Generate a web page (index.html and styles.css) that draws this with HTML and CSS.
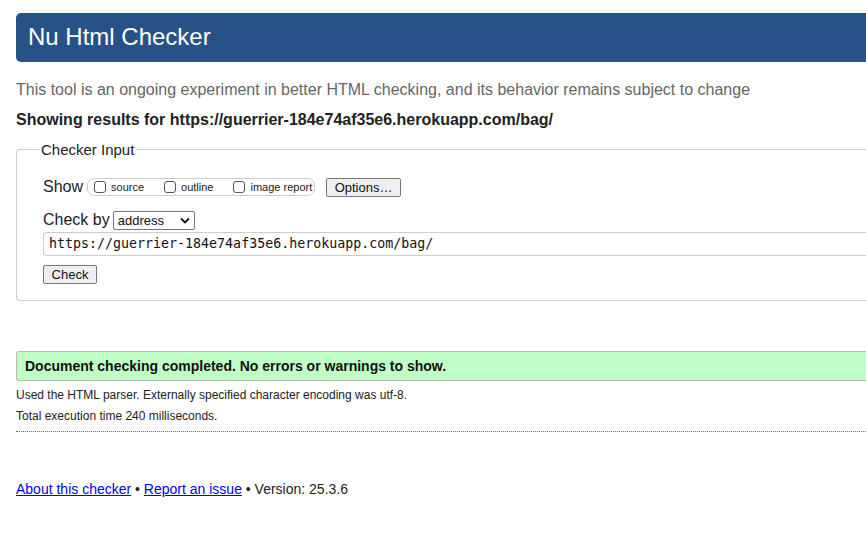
FILE: index.html
```html
<!DOCTYPE html>
<html>
<head>
<meta charset="utf-8">
<link rel="stylesheet" href="styles.css">
</head>
<body>
<div class="page">
  <h1 class="title">Nu Html Checker</h1>
  <p class="intro">This tool is an ongoing experiment in better HTML checking, and its behavior remains subject to change</p>
  <p class="showing">Showing results for https://guerrier-184e74af35e6.herokuapp.com/bag/</p>
  <fieldset class="input-box">
    <legend class="legend">Checker Input</legend>
    <div class="row show-row">
      <span class="lbl">Show</span>
      <span class="opts">
        <label class="opt"><span class="cb"></span>source</label>
        <label class="opt"><span class="cb"></span>outline</label>
        <label class="opt"><span class="cb"></span>image report</label>
      </span>
      <span class="btn btn-options">Options…</span>
    </div>
    <div class="row by-row">
      <span class="lbl">Check by</span>
      <span class="select">address<svg class="chev" width="10" height="7" viewBox="0 0 10 7"><path d="M1 1.5 L5 5.5 L9 1.5" fill="none" stroke="#111" stroke-width="1.8"/></svg></span>
    </div>
    <div class="url">https://guerrier-184e74af35e6.herokuapp.com/bag/</div>
    <span class="btn btn-check">Check</span>
  </fieldset>
  <div class="success">Document checking completed. No errors or warnings to show.</div>
  <p class="detail">Used the HTML parser. Externally specified character encoding was utf-8.</p>
  <p class="detail">Total execution time 240 milliseconds.</p>
  <hr class="dots">
  <p class="footer"><a href="#">About this checker</a> • <a href="#">Report an issue</a> • Version: 25.3.6</p>
</div>
</body>
</html>
```
FILE: styles.css
```css
html, body {
  margin: 0;
  padding: 0;
  background: #fff;
  overflow: hidden;
}
body {
  font-family: "Liberation Sans", Arial, sans-serif;
  color: #222;
}
.page {
  width: 900px;
  padding: 13px 0 0 16px;
}
.title {
  margin: 0;
  height: 49px;
  box-sizing: border-box;
  padding: 9px 0 0 12px;
  background: #275288;
  color: #fff;
  font-size: 24px;
  font-weight: normal;
  line-height: 30px;
  border-radius: 5px 0 0 5px;
}
.intro {
  margin: 18px 0 0 0;
  font-size: 16px;
  line-height: 20px;
  color: #666;
}
.showing {
  margin: 10px 0 0 0;
  font-size: 16px;
  line-height: 20px;
  font-weight: bold;
  color: #222;
}
.input-box {
  margin: 12px 0 0 0;
  padding: 5px 0 16px 26px;
  border: 1px solid #ccc;
  border-radius: 4px 0 0 4px;
  border-right: none;
  min-width: 0;
}
.legend {
  font-size: 15px;
  line-height: 15px;
  padding: 0 2px;
  margin-left: -4px;
  color: #222;
}
.row {
  display: flex;
  align-items: center;
}
.show-row {
  height: 20px;
  margin-top: 15px;
}
.lbl {
  font-size: 16px;
  color: #222;
}
.opts {
  display: flex;
  align-items: center;
  margin-left: 4px;
  height: 18px;
  box-sizing: border-box;
  width: 228px;
  border: 1px solid #ccc;
  border-radius: 7px;
  padding: 0 0 0 6px;
  gap: 20px;
}
.opt {
  display: flex;
  align-items: flex-end;
  font-size: 11px;
  color: #222;
  line-height: 13px;
}
.cb {
  width: 12px;
  height: 12px;
  box-sizing: border-box;
  border: 1px solid #555;
  border-radius: 3px;
  margin-right: 5px;
  margin-bottom: 1px;
}
.btn {
  display: inline-flex;
  align-items: center;
  justify-content: center;
  box-sizing: border-box;
  height: 19px;
  border: 1px solid #777;
  border-radius: 2px;
  background: #efefef;
  font-size: 13px;
  color: #111;
}
.btn-options {
  margin-left: 11px;
  width: 75px;
}
.by-row {
  margin-top: 13px;
  height: 20px;
}
.select {
  display: inline-flex;
  align-items: center;
  justify-content: space-between;
  box-sizing: border-box;
  margin-left: 3px;
  width: 82px;
  height: 19px;
  border: 1px solid #767676;
  border-radius: 2px;
  padding: 0 4px 0 4px;
  font-size: 13px;
  color: #111;
}
.url {
  margin-top: 2px;
  height: 24px;
  box-sizing: border-box;
  border: 1px solid #ccc;
  border-right: none;
  border-radius: 4px 0 0 4px;
  padding: 0 0 0 5px;
  font-family: "DejaVu Sans Mono", monospace;
  font-size: 13.3px;
  line-height: 22px;
  color: #111;
}
.btn-check {
  margin-top: 9px;
  width: 54px;
}
.success {
  margin-top: 50px;
  height: 30px;
  box-sizing: border-box;
  background: #c0ffc5;
  border: 1px solid #bbb;
  border-right: none;
  border-radius: 3px 0 0 3px;
  padding: 0 0 0 8px;
  font-size: 14px;
  font-weight: bold;
  line-height: 28px;
  color: #111;
}
.detail {
  margin: 7px 0 0 0;
  font-size: 12px;
  line-height: 15px;
  color: #222;
}
.detail + .detail {
  margin-top: 6px;
}
.dots {
  margin: 7px 0 0 0;
  border: none;
  border-top: 1px dotted #666;
  height: 0;
}
.footer {
  margin: 48px 0 0 0;
  font-size: 14px;
  line-height: 18px;
  color: #222;
}
.footer a {
  color: #00e;
}
```
